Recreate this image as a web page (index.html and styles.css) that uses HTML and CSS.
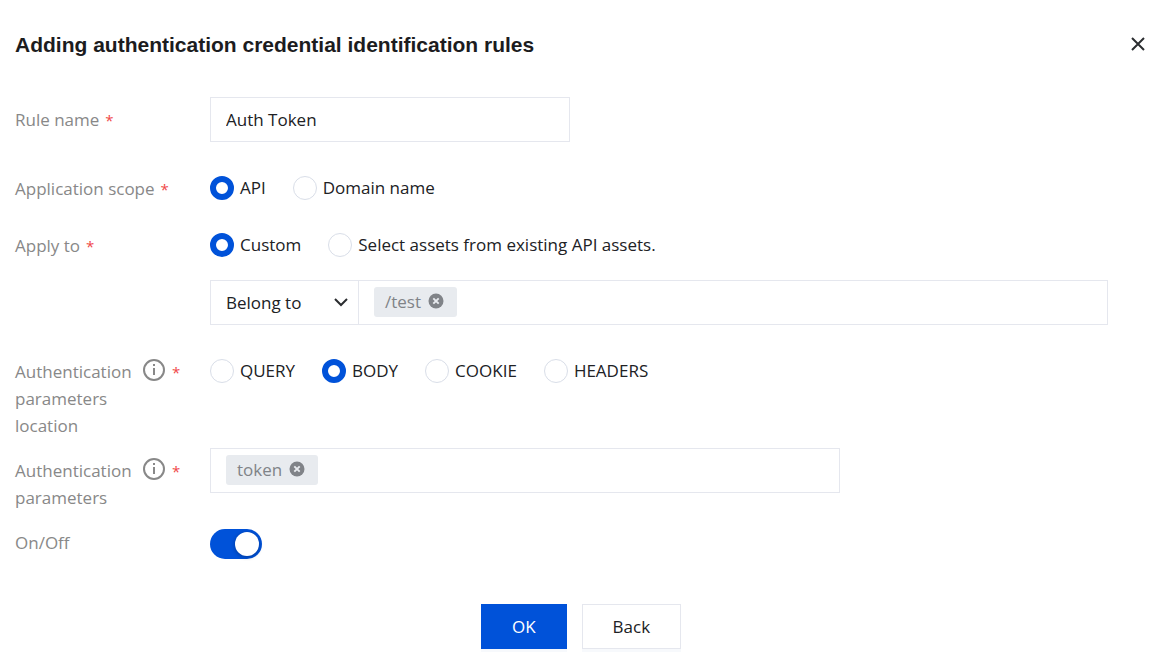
FILE: index.html
```html
<!DOCTYPE html>
<html lang="en">
<head>
    <meta charset="UTF-8">
    <meta name="viewport" content="width=device-width, initial-scale=1.0">
    <title>Adding authentication credential identification rules</title>
    <link rel="stylesheet" href="styles.css">
</head>
<body>
    <div class="dialog">
        <div class="dialog-header">
            <h2>Adding authentication credential identification rules</h2>
            <button type="button" class="btn-close" aria-label="Close">
                <svg width="18" height="18" viewBox="0 0 18 18" fill="none" stroke="#2b2d30" stroke-width="2">
                    <path d="M3 3l12 12M15 3L3 15"/>
                </svg>
            </button>
        </div>
        <form id="ruleForm">
            <div class="form-row row-name">
                <label class="form-label" for="ruleName"><span>Rule name</span><span class="required">*</span></label>
                <div class="form-control">
                    <input type="text" class="text-input" id="ruleName" name="ruleName" value="Auth Token" required />
                </div>
            </div>
            <div class="form-row row-scope" role="radiogroup" aria-labelledby="scopeLabel">
                <div class="form-label" id="scopeLabel"><span>Application scope</span><span class="required">*</span></div>
                <div class="form-control radio-group">
                    <label class="radio"><input type="radio" name="scope" value="api" checked />API</label>
                    <label class="radio"><input type="radio" name="scope" value="domain" />Domain name</label>
                </div>
            </div>
            <div class="form-row row-apply" role="radiogroup" aria-labelledby="applyLabel">
                <div class="form-label" id="applyLabel"><span>Apply to</span><span class="required">*</span></div>
                <div class="form-control">
                    <div class="radio-group">
                        <label class="radio"><input type="radio" name="applyTo" value="custom" checked />Custom</label>
                        <label class="radio"><input type="radio" name="applyTo" value="assets" />Select assets from existing API assets.</label>
                    </div>
                    <div class="match-group">
                        <div class="select-box">
                            <select name="matchType" aria-label="Match type">
                                <option>Belong to</option>
                                <option>Not belong to</option>
                            </select>
                            <svg class="select-arrow" width="14" height="10" viewBox="0 0 14 10" fill="none" stroke="#2b2d30" stroke-width="2">
                                <path d="M1 1l6 6 6-6"/>
                            </svg>
                        </div>
                        <div class="tag-input">
                            <span class="tag">/test
                                <button type="button" class="tag-remove" aria-label="Remove /test">
                                    <svg width="16" height="16" viewBox="0 0 16 16">
                                        <circle cx="8" cy="8" r="7.5" fill="#808388"/>
                                        <path d="M5.3 5.3l5.4 5.4M10.7 5.3l-5.4 5.4" stroke="#e8ebef" stroke-width="1.9"/>
                                    </svg>
                                </button>
                            </span>
                            <input type="text" name="path" aria-label="Add path" />
                        </div>
                    </div>
                </div>
            </div>
            <div class="form-row row-location" role="radiogroup" aria-labelledby="locationLabel">
                <div class="form-label" id="locationLabel">
                    <span class="label-text">Authentication parameters location</span>
                    <svg class="info" width="22" height="22" viewBox="0 0 22 22" fill="none" stroke="#888" stroke-width="2">
                        <circle cx="11" cy="11" r="10"/>
                        <path d="M11 9v7M11 5v2"/>
                    </svg>
                    <span class="required">*</span>
                </div>
                <div class="form-control radio-group">
                    <label class="radio"><input type="radio" name="location" value="query" />QUERY</label>
                    <label class="radio"><input type="radio" name="location" value="body" checked />BODY</label>
                    <label class="radio"><input type="radio" name="location" value="cookie" />COOKIE</label>
                    <label class="radio"><input type="radio" name="location" value="headers" />HEADERS</label>
                </div>
            </div>
            <div class="form-row row-params">
                <label class="form-label" for="params">
                    <span class="label-text">Authentication parameters</span>
                    <svg class="info" width="22" height="22" viewBox="0 0 22 22" fill="none" stroke="#888" stroke-width="2">
                        <circle cx="11" cy="11" r="10"/>
                        <path d="M11 9v7M11 5v2"/>
                    </svg>
                    <span class="required">*</span>
                </label>
                <div class="form-control">
                    <div class="tag-input tag-input-params">
                        <span class="tag">token
                            <button type="button" class="tag-remove" aria-label="Remove token">
                                <svg width="16" height="16" viewBox="0 0 16 16">
                                    <circle cx="8" cy="8" r="7.5" fill="#808388"/>
                                    <path d="M5.3 5.3l5.4 5.4M10.7 5.3l-5.4 5.4" stroke="#e8ebef" stroke-width="1.9"/>
                                </svg>
                            </button>
                        </span>
                        <input type="text" id="params" name="params" />
                    </div>
                </div>
            </div>
            <div class="form-row row-switch">
                <label class="form-label" for="enabled">On/Off</label>
                <div class="form-control">
                    <input type="checkbox" role="switch" class="switch" id="enabled" name="enabled" checked />
                </div>
            </div>
            <div class="form-actions">
                <button type="submit" class="btn btn-primary">OK</button>
                <button type="button" class="btn">Back</button>
            </div>
        </form>
    </div>
</body>
</html>
```
FILE: styles.css
```css
* {
    box-sizing: border-box;
}
body {
    margin: 0;
    background: #fff;
    color: #202124;
    font-family: "Open Sans", "Noto Sans", sans-serif;
    font-size: 17px;
    line-height: 27px;
}
input, select, button {
    font: inherit;
    color: inherit;
}
.dialog {
    padding: 29px 25px 20px 15px;
}
.dialog-header {
    display: flex;
    align-items: center;
    justify-content: space-between;
    height: 30px;
    margin-bottom: 38px;
}
.dialog-header h2 {
    margin: 0;
    font-family: "Liberation Sans", Arial, sans-serif;
    font-size: 21px;
    color: #1c1c1e;
}
.btn-close {
    display: flex;
    padding: 0;
    border: none;
    background: none;
    cursor: pointer;
}
.form-row {
    display: flex;
    align-items: flex-start;
}
.form-label {
    display: flex;
    flex: none;
    width: 195px;
    color: #888;
}
.label-text {
    width: 120px;
}
.info {
    margin: 1px 1px 0 8px;
}
.required {
    margin-left: 6px;
    padding-top: 1px;
    color: #f04848;
    font-size: 15px;
}
.form-control {
    flex: 1;
    min-width: 0;
}
.row-name {
    align-items: center;
    margin-bottom: 34px;
}
.row-scope {
    margin-bottom: 30px;
}
.row-scope .form-label,
.row-apply .form-label {
    line-height: 25px;
}
.row-scope .form-label {
    height: 27px;
}
.row-apply {
    margin-bottom: 33px;
}
.row-location {
    margin-bottom: 9px;
}
.row-location .radio-group {
    padding-top: 1px;
}
.row-params {
    margin-bottom: 18px;
}
.row-params .form-label {
    padding-top: 9px;
}
.text-input {
    display: block;
    width: 360px;
    max-width: 100%;
    height: 45px;
    padding: 0 15px;
    border: 1px solid #e5e7ee;
    outline: none;
}
.radio-group {
    display: flex;
    flex-wrap: wrap;
    gap: 27px;
}
.radio {
    display: flex;
    align-items: center;
    gap: 6px;
    line-height: 24px;
    cursor: pointer;
}
.radio input {
    appearance: none;
    flex: none;
    width: 24px;
    height: 24px;
    margin: 0;
    border: 1px solid #d9dee8;
    border-radius: 50%;
    background: #fff;
}
.radio input:checked {
    border: 6px solid #0052d9;
}
.match-group {
    display: flex;
    margin: 23px 39px 0 0;
}
.select-box {
    position: relative;
    flex: none;
    width: 149px;
}
.select-box select {
    appearance: none;
    width: 100%;
    height: 45px;
    padding: 0 15px;
    border: 1px solid #e5e7ee;
    border-radius: 0;
    background: #fff;
    outline: none;
}
.select-arrow {
    position: absolute;
    top: 18px;
    right: 11px;
    pointer-events: none;
}
.tag-input {
    display: flex;
    flex: 1;
    align-items: flex-start;
    height: 45px;
    padding: 6px 15px;
    border: 1px solid #e5e7ee;
}
.match-group .tag-input {
    border-left: none;
}
.tag-input-params {
    max-width: 630px;
}
.tag-input input {
    flex: 1;
    min-width: 0;
    border: none;
    outline: none;
    background: none;
}
.tag {
    display: flex;
    align-items: center;
    gap: 7px;
    height: 30px;
    padding: 0 13px 2px 11px;
    border-radius: 3px;
    background: #e8ebef;
    color: #808388;
}
.tag-remove {
    display: flex;
    padding: 0;
    border: none;
    background: none;
    cursor: pointer;
}
.switch {
    appearance: none;
    display: flex;
    align-items: center;
    justify-content: flex-end;
    width: 52px;
    height: 30px;
    margin: 0;
    padding: 3px;
    border-radius: 15px;
    background: #0052d9;
    cursor: pointer;
}
.switch::before {
    content: "";
    width: 24px;
    height: 24px;
    border-radius: 50%;
    background: #fff;
    box-shadow: 0 1px 4px rgba(0, 0, 0, 0.3);
}
.switch:not(:checked) {
    justify-content: flex-start;
    background: #c9ced8;
}
.form-actions {
    display: flex;
    justify-content: center;
    gap: 15px;
    margin-top: 45px;
}
.btn {
    height: 45px;
    padding: 0 30px;
    border: 1px solid #e5e7ee;
    background: #fff;
    box-shadow: 0 3px 0 #f7f9fc;
    cursor: pointer;
}
.btn-primary {
    border-color: #0052d9;
    background: #0052d9;
    color: #fff;
}
```
